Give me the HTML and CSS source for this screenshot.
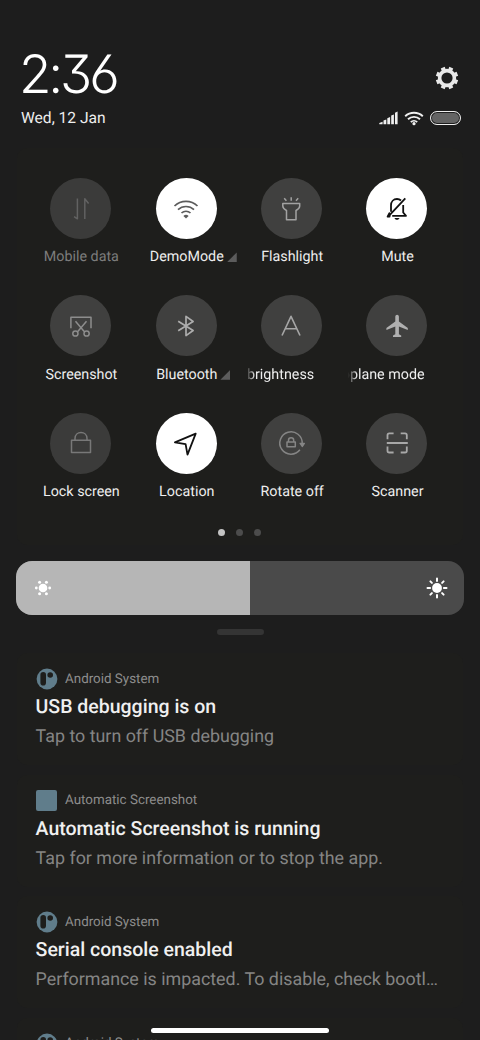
FILE: index.html
```html
<!DOCTYPE html>
<html lang="en">
<head>
<meta charset="utf-8">
<title>Control centre</title>
<link rel="stylesheet" href="styles.css">
</head>
<body>
<main class="shade">
  <header class="header">
    <div class="header-row">
      <div class="clock"><span>2</span><span>:</span><span>3</span><span>6</span></div>
      <svg class="gear" width="24" height="24" viewBox="0 0 24 24"><circle cx="12" cy="12" r="7.4" fill="none" stroke="#e8e8e8" stroke-width="3.6"/><g stroke="#e8e8e8" stroke-width="4.2"><path d="M12 4V.8M12 20v3.2M4 12H.8M20 12h3.2" transform="rotate(22.5 12 12)"/><path d="M12 4V.8M12 20v3.2M4 12H.8M20 12h3.2" transform="rotate(67.5 12 12)"/></g></svg>
    </div>
    <div class="status-row">
      <div class="date">Wed, 12 Jan</div>
      <div class="status">
        <svg width="19" height="14" viewBox="0 0 19 14" fill="#f0f0f0"><path d="M.3 13.2v-1.3l3.3-1.2v2.5zM4.5 13.2V9.6l2.8-1.2v4.8zM8.3 13.2V7.2l2.8-1.2v7.2zM12.2 13.2V4.6l2.7-1.2v9.8zM16 13.2V1.8l2.6-1.2v12.6z"/></svg>
        <svg class="status-wifi" width="20" height="15" viewBox="0 0 20 15"><g fill="none" stroke="#f0f0f0" stroke-width="1.9"><path d="M1.2 5.2a12.8 12.8 0 0 1 17.6 0M4 8.3a8.6 8.6 0 0 1 12 0M6.8 11.1a4.7 4.7 0 0 1 6.4 0"/></g><circle cx="10" cy="12.7" r="1.6" fill="#f0f0f0"/></svg>
        <span class="battery"></span>
      </div>
    </div>
  </header>

  <section class="panel">
    <div class="tiles">
      <div class="tile off"><div class="disc"><svg viewBox="0 0 28 28" stroke="#626262" stroke-width="1.5"><path d="M10.4 3.5v20.3l-3.3-2.2M17.8 24V3.8l3.8 4.6"/></svg></div><div class="label">Mobile data</div></div>
      <div class="tile on"><div class="disc"><svg viewBox="0 0 28 28" stroke="#5c5c5c" stroke-width="1.7"><path d="M2.5 11a16.5 16.5 0 0 1 23 0M6 14.7a11.6 11.6 0 0 1 16 0M9.5 18a6.6 6.6 0 0 1 9 0"/><path d="M14 23.4l-2.6-2.4a3.6 3.6 0 0 1 5.2 0z" fill="#5c5c5c" stroke="none"/></svg></div><div class="label">DemoMode<i class="corner"></i></div></div>
      <div class="tile"><div class="disc"><svg viewBox="0 0 28 28" stroke="#a2a2a2" stroke-width="1.5"><path d="M5.8 8.6h16.9v2.5c0 2-1.3 3.2-3.7 4.4v9.3H9.5v-9.3c-2.4-1.2-3.7-2.4-3.7-4.4zM14.2 2.3v3.4M7.2 3.3l2.2 2.5M21.2 3.3L19 5.8"/></svg></div><div class="label">Flashlight</div></div>
      <div class="tile on"><div class="disc"><svg viewBox="0 0 28 28" stroke="#111" stroke-width="1.8"><path d="M8 16.7V10.3C8 6.6 10.5 4 14 4c1.7 0 3 .6 4 1.5M20.2 10v7.5l2.8 3.4H9.2M22.3 3.4L5.2 21.6"/><path d="M6.4 18.2L4.6 21.6h2z" fill="#111"/><path d="M11.3 23h5.4l-1.6 1.8h-2.2z" fill="#111" stroke="none"/></svg></div><div class="label">Mute</div></div>

      <div class="tile"><div class="disc"><svg viewBox="0 0 28 28" stroke="#8d8d8d" stroke-width="1.5"><path d="M3.9 16.2V5.2H24v11M8.5 9.3l8.7 10.2M19.5 9.3l-8.7 10.2"/><circle cx="8.4" cy="21.5" r="2.6"/><circle cx="19.6" cy="21.5" r="2.6"/></svg></div><div class="label">Screenshot</div></div>
      <div class="tile"><div class="disc"><svg viewBox="0 0 28 28" stroke="#adadad" stroke-width="1.7"><path d="M6.2 9.2l14.9 9.3L14 23.6V4.4l7.1 5.1-14.9 9.3"/></svg></div><div class="label">Bluetooth<i class="corner"></i></div></div>
      <div class="tile"><div class="disc"><svg viewBox="0 0 28 28" stroke="#a6a6a6" stroke-width="1.6"><path d="M5 23.5L14 4.3l9 19.2M8.5 16.8h11"/></svg></div><div class="label"><span class="marquee bright">brightness</span></div></div>
      <div class="tile"><div class="disc"><svg viewBox="0 0 28 28" fill="#b0b0b0"><path d="M12.3 9.6V4.8c0-2.7 3.6-2.7 3.6 0v4.8l8.9 6.4v2l-8.9-3.6v7.8l2.3 1.3v1.6H10v-1.6l2.3-1.3v-7.8L3.4 18v-2z"/></svg></div><div class="label"><span class="marquee plane">oplane mode</span></div></div>

      <div class="tile dim"><div class="disc"><svg viewBox="0 0 28 28" stroke="#787878" stroke-width="1.5"><path d="M4.5 11.2h19v12.3h-19zM8 11V9.5c0-8 12-8 12 0V11"/></svg></div><div class="label">Lock screen</div></div>
      <div class="tile on"><div class="disc"><svg viewBox="0 0 28 28" stroke="#111" stroke-width="1.8"><path d="M23.7 4.7L2.9 13.4l10.7 1.8 1.9 10.4z"/></svg></div><div class="label">Location</div></div>
      <div class="tile"><div class="disc"><svg viewBox="0 0 28 28" stroke="#858585" stroke-width="1.5"><path d="M22.9 20.8A11.2 11.2 0 1 1 25.2 14.5M10 12.9h8.3v4.9H10zM11.5 12.7v-1.5c0-3.2 5.2-3.2 5.2 0v1.5"/><path d="M23.2 14.4h4.1l-2 3z" fill="#858585"/></svg></div><div class="label">Rotate off</div></div>
      <div class="tile"><div class="disc"><svg viewBox="0 0 28 28" stroke="#a8a8a8" stroke-width="1.8"><path d="M4.5 10.3V6.2q0-1.8 1.8-1.8h4.3M17.7 4.4H22q1.8 0 1.8 1.8v4.1M4.5 17.6v4.1q0 1.8 1.8 1.8h4.3M17.7 23.5H22q1.8 0 1.8-1.8v-4.1M3.8 14h21"/></svg></div><div class="label">Scanner</div></div>
    </div>
    <div class="pages"><i class="current"></i><i></i><i></i></div>
  </section>

  <div class="slider">
    <div class="level">
      <svg width="18" height="18" viewBox="0 0 18 18" fill="#fff"><circle cx="9" cy="9" r="4.3"/><circle cx="2.3" cy="9" r="1.4"/><circle cx="15.7" cy="9" r="1.4"/><circle cx="5.6" cy="3.2" r="1.5"/><circle cx="12.4" cy="3.2" r="1.5"/><circle cx="5.6" cy="14.8" r="1.5"/><circle cx="12.4" cy="14.8" r="1.5"/></svg>
    </div>
    <svg width="22" height="22" viewBox="0 0 22 22"><circle cx="11" cy="11" r="4.9" fill="#fff"/><g stroke="#fff" stroke-width="2" stroke-linecap="round"><path d="M11 1.5v2.6M11 17.9v2.6M1.5 11h2.6M17.9 11h2.6M4.4 4.4l1.5 1.5M16.1 16.1l1.5 1.5M4.4 17.6l1.5-1.5M16.1 5.9l1.5-1.5"/></g></svg>
  </div>
  <div class="handle"></div>

  <section class="notifications">
    <article class="card">
      <div class="app"><svg class="app-icon" viewBox="0 0 22 22"><circle cx="11" cy="11" r="10.4" fill="#607d8b"/><rect x="4.4" y="4" width="5.6" height="13.5" rx="2.8" fill="#1e1e1c"/><circle cx="14.2" cy="7" r="2.8" fill="#1e1e1c"/></svg><span>Android System</span></div>
      <h2>USB debugging is on</h2>
      <p>Tap to turn off USB debugging</p>
    </article>
    <article class="card">
      <div class="app"><span class="app-icon square"></span><span>Automatic Screenshot</span></div>
      <h2>Automatic Screenshot is running</h2>
      <p>Tap for more information or to stop the app.</p>
    </article>
    <article class="card">
      <div class="app"><svg class="app-icon" viewBox="0 0 22 22"><circle cx="11" cy="11" r="10.4" fill="#607d8b"/><rect x="4.4" y="4" width="5.6" height="13.5" rx="2.8" fill="#1e1e1c"/><circle cx="14.2" cy="7" r="2.8" fill="#1e1e1c"/></svg><span>Android System</span></div>
      <h2>Serial console enabled</h2>
      <p>Performance is impacted. To disable, check bootl…</p>
    </article>
    <article class="card">
      <div class="app"><svg class="app-icon" viewBox="0 0 22 22"><circle cx="11" cy="11" r="10.4" fill="#607d8b"/><rect x="4.4" y="4" width="5.6" height="13.5" rx="2.8" fill="#1e1e1c"/><circle cx="14.2" cy="7" r="2.8" fill="#1e1e1c"/></svg><span>Android System</span></div>
    </article>
  </section>
  <div class="home-bar"></div>
</main>
</body>
</html>
```
FILE: styles.css
```css
* { box-sizing: border-box; }
html, body { margin: 0; height: 1040px; overflow: hidden; background: #1d1d1d; }
body { font-family: Roboto, "Noto Sans", sans-serif; color: #eee; text-rendering: geometricPrecision; }
svg { display: block; flex: none; }
.shade { position: relative; height: 1040px; overflow: hidden; display: flex; flex-direction: column; }

.header { height: 148px; flex: none; padding: 45px 19px 0 21px; }
.header-row { display: flex; justify-content: space-between; height: 58px; }
.clock { display: flex; margin-left: -2px; font: 300 53px/58px Inter, Lato, sans-serif; font-feature-settings: "cv03", "cv09"; color: #fff; letter-spacing: -3.2px; }
.gear { margin: 21px 2px 0 0; }
.status-row { display: flex; justify-content: space-between; align-items: center; height: 30px; }
.date { font-size: 15.6px; color: #eee; }
.status { display: flex; align-items: center; }
.status-wifi { margin: 0 6px 0 6px; }
.battery { width: 31px; height: 14px; border: 1.5px solid #eee; border-radius: 7px; background: #646464; box-shadow: inset 0 0 0 1px #1d1d1d; }

.panel { flex: none; width: 446px; height: 397px; margin-left: 17px; padding: 30px 13px 0 11px; border-radius: 10px; background: #1e1e1c; }
.tiles { display: grid; grid-template-columns: repeat(4, 105.4px); grid-auto-rows: 117.4px; }
.tile { display: flex; flex-direction: column; align-items: center; }
.disc { width: 61px; height: 61px; border-radius: 50%; background: #40403f; display: grid; place-items: center; }
.disc svg { width: 28px; height: 28px; fill: none; stroke-linejoin: round; }
.disc svg[fill] { fill: #b0b0b0; }
.off .disc, .dim .disc { background: #3b3b3a; }
.on .disc { background: #fff; }
.label { position: relative; left: .7px; margin-top: 8.4px; font-size: 14.3px; line-height: 20px; white-space: nowrap; color: #eee; }
.off .label { color: #7d7d7d; }
.corner { position: absolute; left: calc(100% + 3px); bottom: 5px; width: 10px; height: 10px; background: #5c5c5c; clip-path: polygon(100% 0, 100% 100%, 0 100%); }
.marquee { display: flex; justify-content: flex-end; overflow: hidden; mask-image: linear-gradient(90deg, transparent, #000 9px); }
.bright { width: 68px; margin-right: 24px; }
.plane { width: 77px; margin-right: 23px; }
.pages { display: flex; justify-content: center; gap: 11px; margin-top: -1.6px; }
.pages i { width: 7px; height: 7px; border-radius: 50%; background: #4c4c4c; }
.pages .current { background: #c4c4c4; }

.slider { flex: none; display: flex; align-items: center; justify-content: space-between; width: 448px; height: 54px; margin: 16px 0 0 16px; padding-right: 16px; border-radius: 16px; overflow: hidden; background: #4a4a4a; }
.level { display: flex; align-items: center; width: 234px; height: 54px; padding-left: 18px; background: #b6b6b6; }
.handle { flex: none; width: 47px; height: 6px; margin: 14px auto 0 217px; border-radius: 3px; background: #343434; }

.notifications { margin: 18px 17px 0; display: flex; flex-direction: column; gap: 9.5px; }
.card { flex: none; height: 112px; padding: 15px 19px; border-radius: 10px; background: #1e1e1c; overflow: hidden; white-space: nowrap; }
.app { display: flex; align-items: center; gap: 7px; height: 22px; font-size: 13.4px; line-height: 18px; color: #8d8d8c; }
.app span:last-child { padding-top: 1px; }
.app-icon { width: 22px; height: 22px; }
.square { width: 21px; height: 21px; margin-right: 1px; border-radius: 2px; background: #607d8b; }
.card h2 { margin: 4px 0 0 -.4px; font-size: 19.5px; font-weight: 500; line-height: 26px; color: #f0f0f0; }
.card p { margin: 4px 0 0 -.4px; font-size: 17.85px; line-height: 26px; color: #858584; }
.home-bar { position: absolute; left: 151px; top: 1028px; width: 178px; height: 5px; border-radius: 3px; background: #fff; }
```
